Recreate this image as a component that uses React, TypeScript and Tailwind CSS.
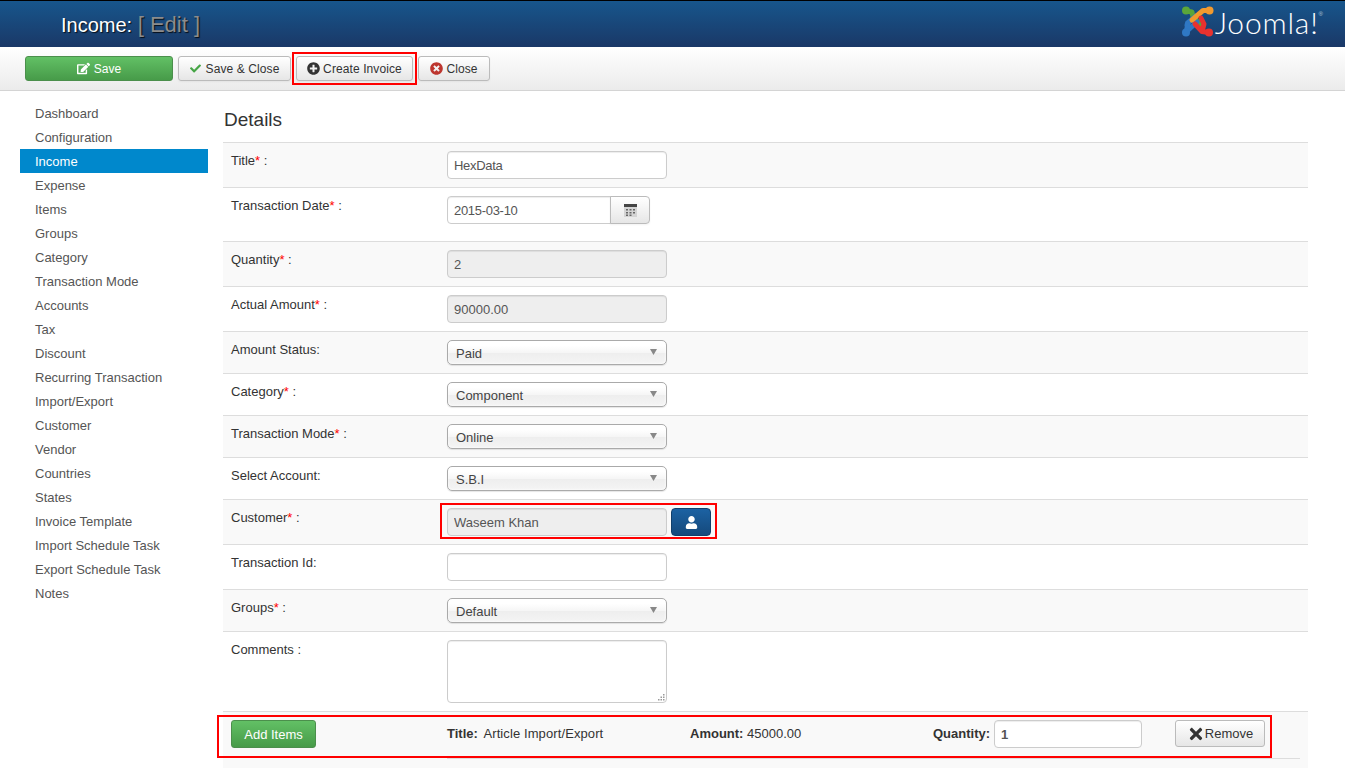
import React from "react";
import { FaEdit, FaCheck, FaPlusCircle, FaTimesCircle, FaTimes, FaUser } from "react-icons/fa";

const nav = ["Dashboard","Configuration","Income","Expense","Items","Groups","Category","Transaction Mode","Accounts","Tax","Discount","Recurring Transaction","Import/Export","Customer","Vendor","Countries","States","Invoice Template","Import Schedule Task","Export Schedule Task","Notes"];

function Label({ text, req, colon = " :" }: { text: string; req?: boolean; colon?: string }) {
  return (
    <div className="w-[224px] shrink-0 pl-2 pt-[9px] leading-[18px] text-[#333]">
      {text}
      {req && <span className="text-[#f00]">*</span>}
      {colon}
    </div>
  );
}

function Row({ h, odd, children }: { h: string; odd: boolean; children: React.ReactNode }) {
  return <div className={`flex border-t border-[#ddd] ${h} ${odd ? "bg-[#f9f9f9]" : "bg-white"}`}>{children}</div>;
}

const inputCls = "block h-[28px] rounded-[4px] border border-[#ccc] px-[6px] text-[13px] text-[#555] shadow-[inset_0_1px_1px_rgba(0,0,0,0.075)] outline-none";

function Select({ value }: { value: string }) {
  return (
    <div className="relative mt-2 h-[25px] w-[220px] rounded-[5px] border border-[#aaa] pl-2 pt-[4px] leading-[18px] text-[#444] bg-[linear-gradient(#fff_20%,#f6f6f6_50%,#eee_52%,#f4f4f4_100%)] shadow-[inset_0_0_3px_#fff,0_1px_1px_rgba(0,0,0,0.1)]">
      {value}
      <svg className="absolute right-[9px] top-[8px]" width="7" height="6" viewBox="0 0 7 6"><path d="M0 0h7L3.5 6z" fill="#888" /></svg>
    </div>
  );
}

function TBtn({ children, className = "" }: { children: React.ReactNode; className?: string }) {
  return (
    <button className={`flex h-[25px] items-center justify-center rounded-[3px] border border-[#bbb] bg-[linear-gradient(#fff,#e6e6e6)] text-[12px] tracking-[0.1px] text-[#333] shadow-[0_1px_2px_rgba(0,0,0,0.05)] ${className}`}>
      {children}
    </button>
  );
}

function Logo() {
  return (
    <svg width="32" height="31" viewBox="0 0 32 31" fill="none" strokeLinecap="round" strokeLinejoin="round" strokeWidth="5">
      <path d="M4 5 L10 6 L11 11 L19 19" stroke="#5ba63a" />
      <circle cx="4" cy="4.5" r="4" fill="#5ba63a" />
      <path d="M5 19 L5.5 17 L14 10" stroke="#2f78c4" />
      <path d="M4 26 L6 18 M4 26 L15 16" stroke="#2f78c4" />
      <circle cx="4" cy="26.5" r="4" fill="#2f78c4" />
      <path d="M27 4.5 L21 4.5 L10 14" stroke="#f29a2e" />
      <circle cx="27.5" cy="4.5" r="4" fill="#f29a2e" />
      <path d="M27 26.5 L20 25.5 L13 18 M20 25.5 L22 18 L19 12" stroke="#e8322f" />
      <circle cx="27" cy="26.5" r="4" fill="#e8322f" />
    </svg>
  );
}

export default function App() {
  return (
    <div className="h-screen overflow-hidden bg-white text-[13px] [font-family:'Liberation_Sans',Arial,sans-serif]">
      <header className="flex h-[47px] items-start border-t border-black bg-[linear-gradient(#17568c,#1a3867)] pl-[61px]">
        <h1 className="mt-[8px] text-[20px] leading-[32px] text-white [text-shadow:1px_1px_1px_rgba(0,0,0,0.8)]">
          Income: <span className="text-[22px] text-[#8c8c8c]">[ Edit ]</span>
        </h1>
        <div className="ml-auto mr-[22px] mt-[5px] flex items-start">
          <Logo />
          <span className="ml-[1px] text-[30px] leading-[32px] tracking-[0.8px] font-light text-white [font-family:Lato,sans-serif]">Joomla!</span>
          <span className="mt-[4px] text-[6px] leading-[8px] text-[#bcd]">®</span>
        </div>
      </header>

      <div className="flex h-[44px] items-start gap-[5px] border-b border-[#d4d4d4] bg-[linear-gradient(#fff,#ebebeb)] pl-[25px] pt-[9px]">
        <button className="flex h-[25px] w-[148px] items-center justify-center gap-[4px] rounded-[3px] border border-[#4b8f4c] bg-[linear-gradient(#62c065,#479b49)] text-[12px] text-white">
          <FaEdit className="text-[13px]" /> Save
        </button>
        <TBtn className="w-[113px] gap-[5px]"><FaCheck className="text-[11px] text-[#46a546]" /> Save &amp; Close</TBtn>
        <div className="relative">
          <TBtn className="w-[117px] gap-[3px]"><FaPlusCircle className="text-[13px]" /> Create Invoice</TBtn>
          <div className="pointer-events-none absolute -bottom-[4px] -left-[4px] -right-[4px] -top-[4px] border-2 border-[#f00]" />
        </div>
        <TBtn className="w-[72px] gap-[3px]"><FaTimesCircle className="text-[13px] text-[#bd362f]" /> Close</TBtn>
      </div>

      <div className="flex">
        <nav className="ml-[20px] mt-[10px] w-[188px] shrink-0">
          {nav.map((n) => (
            <div key={n} className={`h-[24px] pl-[15px] pt-[1px] leading-[24px] ${n === "Income" ? "bg-[#0088cc] text-white" : "text-[#555]"}`}>{n}</div>
          ))}
        </nav>
        <main className="ml-[15px] w-[1085px] shrink-0">
          <h2 className="mt-[17px] h-[34px] pl-px text-[19px] leading-[24px] text-[#333]">Details</h2>

          <Row h="h-[45px]" odd={true}>
            <Label text="Title" req />
            <input readOnly value="HexData" className={`${inputCls} mt-2 w-[220px] bg-white tracking-[-0.3px]`} />
          </Row>
          <Row h="h-[54px]" odd={false}>
            <Label text="Transaction Date" req />
            <div className="mt-2 flex">
              <input readOnly value="2015-03-10" className={`${inputCls} w-[164px] rounded-r-none bg-white tracking-[-0.3px]`} />
              <button className="-ml-px flex h-[28px] w-[40px] items-center justify-center rounded-r-[4px] border border-[#bbb] bg-[linear-gradient(#fff,#e6e6e6)] shadow-[0_1px_2px_rgba(0,0,0,0.05)]">
                <svg width="13" height="13" viewBox="0 0 13 13">
                  <rect x="0" y="0" width="13" height="13" fill="#d4d4d4" />
                  <rect x="0" y="0" width="13" height="3" fill="#444" />
                  <path d="M2 5h2v1.5H2zM5.5 5h2v1.5h-2zM9 5h2v1.5H9zM2 8h2v1.5H2zM5.5 8h2v1.5h-2zM9 8h2v1.5H9zM5.5 10.6h2V12h-2zM2 10.6h2V12H2z" fill="#666" />
                </svg>
              </button>
            </div>
          </Row>
          <Row h="h-[45px]" odd={true}>
            <Label text="Quantity" req />
            <input readOnly value="2" className={`${inputCls} mt-2 w-[220px] bg-[#eee]`} />
          </Row>
          <Row h="h-[45px]" odd={false}>
            <Label text="Actual Amount" req />
            <input readOnly value="90000.00" className={`${inputCls} mt-2 w-[220px] bg-[#eee]`} />
          </Row>
          <Row h="h-[42px]" odd={true}>
            <Label text="Amount Status" colon=":" />
            <Select value="Paid" />
          </Row>
          <Row h="h-[42px]" odd={false}>
            <Label text="Category" req />
            <Select value="Component" />
          </Row>
          <Row h="h-[42px]" odd={true}>
            <Label text="Transaction Mode" req />
            <Select value="Online" />
          </Row>
          <Row h="h-[42px]" odd={false}>
            <Label text="Select Account" colon=":" />
            <Select value="S.B.I" />
          </Row>
          <Row h="h-[45px]" odd={true}>
            <Label text="Customer" req />
            <div className="relative mt-2 flex h-[28px] gap-[4px]">
              <input readOnly value="Waseem Khan" className={`${inputCls} w-[220px] bg-[#eee]`} />
              <button className="flex h-[28px] w-[40px] items-center justify-center rounded-[4px] border border-[#123f6b] bg-[linear-gradient(#1c62a3,#15497c)] text-white">
                <FaUser className="text-[13px]" />
              </button>
              <div className="pointer-events-none absolute -bottom-[3px] -left-[7px] -right-[6px] -top-[5px] border-2 border-[#f00]" />
            </div>
          </Row>
          <Row h="h-[45px]" odd={false}>
            <Label text="Transaction Id" colon=":" />
            <input readOnly value="" className={`${inputCls} mt-2 w-[220px] bg-white`} />
          </Row>
          <Row h="h-[42px]" odd={true}>
            <Label text="Groups" req />
            <Select value="Default" />
          </Row>
          <Row h="h-[80px]" odd={false}>
            <Label text="Comments" />
            <div className="relative mt-2 h-[63px] w-[220px]">
              <textarea readOnly className="block h-[63px] w-[220px] resize-none rounded-[4px] border border-[#ccc] bg-white shadow-[inset_0_1px_1px_rgba(0,0,0,0.075)] outline-none" />
              <svg className="absolute bottom-[2px] right-[2px]" width="7" height="7" viewBox="0 0 7 7" fill="#999">
                <rect x="5" y="0" width="1.5" height="1.5" /><rect x="2.5" y="2.5" width="1.5" height="1.5" /><rect x="5" y="2.5" width="1.5" height="1.5" />
                <rect x="0" y="5" width="1.5" height="1.5" /><rect x="2.5" y="5" width="1.5" height="1.5" /><rect x="5" y="5" width="1.5" height="1.5" />
              </svg>
            </div>
          </Row>

          <div className="relative h-[57px] border-t border-[#ddd] bg-[#f9f9f9]">
            <div className="flex h-[47px] items-start pl-2 pr-2 pt-2">
              <button className="h-[28px] w-[85px] shrink-0 rounded-[3px] border border-[#4b8f4c] bg-[linear-gradient(#62c065,#479b49)] pt-[1px] text-white">Add Items</button>
              <div className="ml-[131px] flex h-[39px] flex-1 items-start border-b border-[#ddd]">
                <div className="w-[243px] shrink-0 pt-[5px] leading-[18px] text-[#333]"><b>Title:</b> <span className="ml-[2px] tracking-[0.1px]">Article Import/Export</span></div>
                <div className="w-[243px] shrink-0 pt-[5px] leading-[18px] text-[#333]"><b>Amount:</b> 45000.00</div>
                <div className="flex items-start">
                  <b className="mr-[4px] pt-[5px] leading-[18px] text-[#333]">Quantity:</b>
                  <input readOnly value="1" className={`${inputCls} w-[148px] bg-white font-bold`} />
                  <button className="ml-[33px] flex h-[27px] w-[90px] items-center justify-center rounded-[3px] border border-[#bbb] bg-[linear-gradient(#fff,#e6e6e6)] pt-[1px] text-[#333]">
                    <FaTimes className="text-[18px]" /> Remove
                  </button>
                </div>
              </div>
            </div>
            <div className="pointer-events-none absolute left-[-6px] top-[3px] h-[43px] w-[1055px] border-2 border-[#f00]" />
          </div>
        </main>
      </div>
    </div>
  );
}
